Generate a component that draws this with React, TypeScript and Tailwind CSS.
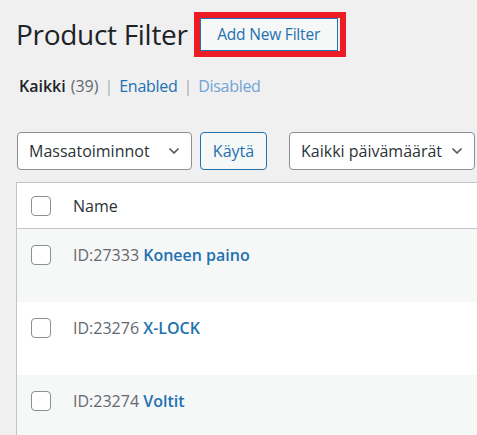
import { ChevronDown } from "lucide-react";

const FONT = { fontFamily: '"Segoe UI", "Open Sans", "Noto Sans", sans-serif' };

type Row = { id: number; name: string };

const ROWS: Row[] = [
  { id: 27333, name: "Koneen paino" },
  { id: 23276, name: "X-LOCK" },
  { id: 23274, name: "Voltit" },
];

function Checkbox() {
  return <span className="block w-5 h-5 shrink-0 bg-white border border-[#8c8f94] rounded-[4px]" />;
}

function Select({ label, className }: { label: string; className: string }) {
  return (
    <div
      className={`flex items-center justify-between shrink-0 h-[38px] bg-white border border-[#8c8f94] rounded-[4px] pl-[11px] pr-[9px] text-[16px] text-[#2c3338] ${className}`}
    >
      <span>{label}</span>
      <ChevronDown className="w-[16px] h-[16px] text-[#50575e]" strokeWidth={2.6} />
    </div>
  );
}

export default function App() {
  return (
    <div style={FONT} className="w-[477px] h-[435px] overflow-hidden bg-[#f0f0f1] text-[#1d2327]">
      {/* Heading */}
      <div className="flex items-center pl-[16px] pt-[12px]">
        <h1 className="text-[28px] tracking-[-0.3px] leading-[45px] font-normal text-[#1d2327]">Product Filter</h1>
        <div className="ml-[6px] border-[6px] border-[#ed1c24] pr-[2px]">
          <button className="h-[33px] w-[138px] bg-[#f6f7f7] border border-[#2271b1] text-[#2271b1] text-[15.5px] tracking-[-0.2px] leading-none">
            Add New Filter
          </button>
        </div>
      </div>

      {/* Views */}
      <div className="flex items-center pl-[19px] mt-[18px] h-[22px] text-[16px]">
        <span className="font-semibold text-[#1d2327]">Kaikki</span>
        <span className="ml-[5px] text-[#646970]">(39)</span>
        <span className="mx-[6px] text-[#a7aaad]">|</span>
        <span className="text-[#2271b1] tracking-[-0.3px]">Enabled</span>
        <span className="mx-[6px] text-[#a7aaad]">|</span>
        <span className="text-[#72a3d5] tracking-[-0.3px]">Disabled</span>
      </div>

      {/* Bulk actions */}
      <div className="flex items-center pl-[17px] mt-[35px]">
        <Select label="Massatoiminnot" className="w-[175px]" />
        <button className="shrink-0 ml-[8px] w-[67px] h-[38px] bg-[#f6f7f7] border border-[#2271b1] rounded-[4px] text-[#2271b1] text-[16px]">
          Käytä
        </button>
        <Select label="Kaikki päivämäärät" className="ml-[22px] w-[186px]" />
      </div>

      {/* Table */}
      <div className="ml-[16px] mt-[12px] border-l border-t border-[#c3c4c7] w-[480px]">
        <div className="flex items-center h-[46px] bg-white border-b border-[#c3c4c7] pl-[14px]">
          <Checkbox />
          <span className="ml-[22px] text-[16px] text-[#2c3338]">Name</span>
        </div>
        {ROWS.map((r, i) => (
          <div
            key={r.id}
            className={`flex items-start h-[73px] pl-[14px] pt-[16px] ${i % 2 === 0 ? "bg-[#f6f7f7]" : "bg-white"}`}
          >
            <Checkbox />
            <div className="ml-[22px] text-[16px] leading-[20px]">
              <span className="text-[#646970]">ID:{r.id}</span>{" "}
              <span className="font-semibold text-[#2271b1]">{r.name}</span>
            </div>
          </div>
        ))}
      </div>
    </div>
  );
}
